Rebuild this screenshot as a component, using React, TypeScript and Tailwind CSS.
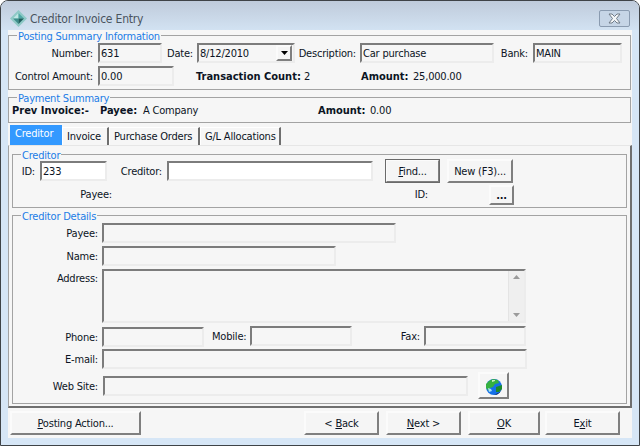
import type { ReactNode } from 'react';

const FONT = "font-['DejaVu_Sans',sans-serif] [font-stretch:condensed] text-[11px] leading-[14px] tracking-[-0.2px] text-[#0c1424]";
const SUNKEN = 'border-2 border-t-[#7c7c7c] border-l-[#7c7c7c] border-r-[#ececec] border-b-[#ececec]';
const RAISED = 'border-2 border-t-[#fbfbfb] border-l-[#fbfbfb] border-r-[#7f7f7f] border-b-[#7f7f7f] bg-[#f5f5f5]';
const TAB = 'h-[18px] pl-[4px] border-t border-l border-white border-r-2 border-r-[#6f6f6f] leading-[17px] whitespace-nowrap';
const BOLD = 'font-bold tracking-normal whitespace-nowrap';

const Input = ({ value, className = '' }: { value?: string; className?: string }) => (
  <div className={`h-5 px-[1px] leading-[17px] whitespace-nowrap overflow-hidden shrink-0 ${SUNKEN} ${className}`}>{value}</div>
);

const Label = ({ children, className = '' }: { children: ReactNode; className?: string }) => (
  <span className={`shrink-0 pt-[2px] text-right whitespace-nowrap ${className}`}>{children}</span>
);

const Btn = ({ children, className = '' }: { children: ReactNode; className?: string }) => (
  <button className={`flex items-center justify-center shrink-0 pt-[2px] ${RAISED} ${className}`}>{children}</button>
);

const Group = ({ title, className = '', children }: { title: string; className?: string; children: ReactNode }) => (
  <fieldset className={`border border-[#a3a3a3] ${className}`}>
    <legend className="ml-[8px] px-[1px] pt-[4px] text-[#1b7ce6] leading-[12px] whitespace-nowrap">{title}</legend>
    {children}
  </fieldset>
);

const Diamond = () => (
  <svg width="17" height="17" viewBox="0 0 17 17" className="shrink-0">
    <polygon points="8.5,0 17,8.5 8.5,17 0,8.5" fill="#8fc9c6" />
    <polygon points="8.5,3 8.5,8.5 3,8.5" fill="#bfe6e4" />
    <polygon points="8.5,3 14,8.5 8.5,8.5" fill="#4fa8a4" />
    <polygon points="3,8.5 8.5,8.5 8.5,14" fill="#3d8f8c" />
    <polygon points="8.5,8.5 14,8.5 8.5,14" fill="#1f5f5e" />
  </svg>
);

const Globe = () => (
  <svg width="16" height="16" viewBox="0 0 16 16">
    <circle cx="8" cy="8" r="8" fill="#1570e8" />
    <path d="M8 16a8 8 0 0 0 8-8 8 8 0 0 1-6 7z" fill="#081850" />
    <path d="M3 2l4-2 5 1 1 3-4 1-2 3-3 1-1 3-3-3 0-4z" fill="#35b040" />
    <path d="M10 8l6-2 0 4-3 3-3 0z" fill="#1c8a2c" />
    <path d="M2 9l3 1 1 2-3 1z" fill="#a8e0f4" />
    <path d="M6 1l3 0 0 1-3 1z" fill="#c8f0c0" />
  </svg>
);

const CloseIcon = () => (
  <svg width="15" height="11" viewBox="0 0 15 11">
    <path d="M2 1h3l2.500 2.500L10 1h3l-3.500 4.500L13 10h-3L7.500 7.500 5 10H2l3.500-4.500z" fill="#f4f6f8" stroke="#6f7a86" strokeWidth="1" />
  </svg>
);

export default function App() {
  return (
    <div className={`w-[640px] h-[446px] flex flex-col overflow-hidden bg-[#d6e6f6] border border-[#3f4347] rounded-t-[8px] ${FONT}`}>
      <div className="h-[29px] shrink-0 flex items-center pl-[9px] pr-[9px] pt-[6px] bg-gradient-to-b from-[#bfcbdb] to-[#d2e2f2]">
        <Diamond />
        <span className="ml-[3px] text-[12px] text-[#4a545e]">Creditor Invoice Entry</span>
        <div className="ml-auto w-[31px] h-[17px] flex items-center justify-center rounded-[2px] border border-[#8a9bb0] bg-[#c6d5e6]">
          <CloseIcon />
        </div>
      </div>

      <div className="mx-[7px] h-[408px] shrink-0 bg-[#f6f6f6]">
        <Group title="Posting Summary Information" className="-mt-[3px] pb-[3px] w-[623px]">
          <div className="flex items-center">
            <Label className="w-[84px] mr-[5px]">Number:</Label>
            <Input value="631" className="w-[64px]" />
            <Label className="w-[31px] mr-[4px]">Date:</Label>
            <div className={`h-5 w-[98px] px-[1px] leading-[17px] flex shrink-0 ${SUNKEN}`}>
              <span className="flex-1">8/12/2010</span>
              <div className={`w-4 h-4 flex items-center justify-center ${RAISED}`}>
                <svg width="7" height="4" viewBox="0 0 7 4"><path d="M0 0h7L3.500 4z" fill="#000" /></svg>
              </div>
            </div>
            <Label className="w-[58px] ml-[3px] mr-[4px]">Description:</Label>
            <Input value="Car purchase" className="w-[134px]" />
            <Label className="w-[34px] mr-[5px]">Bank:</Label>
            <Input value="MAIN" className="w-[89px]" />
          </div>
          <div className="flex items-center mt-[3px]">
            <Label className="w-[84px] mr-[5px]">Control Amount:</Label>
            <Input value="0.00" className="w-[76px]" />
            <span className={`ml-[22px] w-[108px] pt-[2px] ${BOLD}`}>Transaction Count:</span>
            <span className="w-[57px] pt-[2px]">2</span>
            <span className={`w-[52px] pt-[2px] ${BOLD}`}>Amount:</span>
            <span className="pt-[2px]">25,000.00</span>
          </div>
        </Group>

        <Group title="Payment Summary" className="-mt-[1px] w-[623px]">
          <div className="flex items-center h-[11px] leading-[11px] mb-[6px] pl-[3px] whitespace-nowrap">
            <span className={`w-[88px] ${BOLD}`}>Prev Invoice:-</span>
            <span className={`w-[43px] ${BOLD}`}>Payee:</span>
            <span className="w-[175px]">A Company</span>
            <span className={`w-[52px] ${BOLD}`}>Amount:</span>
            <span>0.00</span>
          </div>
        </Group>

        <div className="flex items-end h-5 mt-[2px] pl-[2px]">
          <div className="w-[52px] h-5 pl-[5px] bg-[#3399ff] text-white leading-[18px]">Creditor</div>
          <div className={`w-[47px] ${TAB}`}>Invoice</div>
          <div className={`w-[91px] ${TAB}`}>Purchase Orders</div>
          <div className={`w-[81px] ${TAB}`}>G/L Allocations</div>
        </div>

        <div className="h-[263px] px-[3px] border-l border-l-[#a3a3a3] border-t border-t-[#e6e6e6] border-r-2 border-r-[#6f6f6f] border-b-2 border-b-[#6f6f6f]">
          <Group title="Creditor" className="pb-[2px]">
            <div className="flex items-center -mt-[3px]">
              <Label className="w-[27px] pr-[5px]">ID:</Label>
              <Input value="233" className="w-[67px] bg-white" />
              <Label className="w-[60px] pr-[5px]">Creditor:</Label>
              <Input className="w-[206px] bg-white" />
              <Btn className="h-6 w-[55px] ml-[12px] outline outline-1 -outline-offset-1 outline-[#6a6a6a]"><span><u>F</u>ind...</span></Btn>
              <Btn className="h-6 w-[66px] ml-[7px]">New (F3)...</Btn>
            </div>
            <div className="flex items-start mt-[2px]">
              <Label className="w-[99px] mt-[1px]">Payee:</Label>
              <Label className="w-[316px] mt-[1px]">ID:</Label>
              <Btn className="w-[25px] h-5 ml-[61px] font-bold">...</Btn>
            </div>
          </Group>

          <Group title="Creditor Details" className="-mt-[1px] pb-[4px]">
            <div className="flex items-center">
              <Label className="w-[85px] mr-[4px]">Payee:</Label>
              <Input className="w-[294px]" />
            </div>
            <div className="flex items-center mt-[3px]">
              <Label className="w-[85px] mr-[4px]">Name:</Label>
              <Input className="w-[234px]" />
            </div>
            <div className="flex items-start mt-[3px]">
              <Label className="w-[85px] mr-[4px] mt-[1px]">Address:</Label>
              <div className={`w-[424px] h-[54px] flex justify-end ${SUNKEN}`}>
                <div className="w-[16px] h-full flex flex-col items-center justify-between py-[4px] bg-[#efefef] border-l border-[#e4e4e4]">
                  <svg width="7" height="4" viewBox="0 0 7 4"><path d="M3.500 0L7 4H0z" fill="#9a9a9a" /></svg>
                  <svg width="7" height="4" viewBox="0 0 7 4"><path d="M0 0h7L3.500 4z" fill="#9a9a9a" /></svg>
                </div>
              </div>
            </div>
            <div className="flex items-center mt-[4px]">
              <Label className="w-[85px] mr-[4px]">Phone:</Label>
              <Input className="w-[102px]" />
              <Label className="w-[34px] ml-[8px] mr-[4px] -mt-[2px]">Mobile:</Label>
              <Input className="w-[102px] -mt-[2px]" />
              <Label className="w-[68px] mr-[4px] -mt-[2px]">Fax:</Label>
              <Input className="w-[102px] -mt-[2px]" />
            </div>
            <div className="flex items-center mt-[2px]">
              <Label className="w-[85px] mr-[4px]">E-mail:</Label>
              <Input className="w-[425px]" />
            </div>
            <div className="flex items-center mt-[3px]">
              <Label className="w-[85px] mr-[5px]">Web Site:</Label>
              <Input className="w-[365px]" />
              <Btn className="w-[31px] h-[27px] ml-[10px]"><Globe /></Btn>
            </div>
          </Group>
        </div>

        <div className="flex mt-[3px] pl-[2px]">
          <Btn className="h-6 w-[131px]"><span><u>P</u>osting Action...</span></Btn>
          <Btn className="h-6 w-[75px] ml-[163px]"><span>&lt; <u>B</u>ack</span></Btn>
          <Btn className="h-6 w-[75px] ml-[7px]"><span><u>N</u>ext &gt;</span></Btn>
          <Btn className="h-6 w-[72px] ml-[7px]"><span><u>O</u>K</span></Btn>
          <Btn className="h-6 w-[75px] ml-[5px]"><span>E<u>x</u>it</span></Btn>
        </div>
      </div>
    </div>
  );
}
